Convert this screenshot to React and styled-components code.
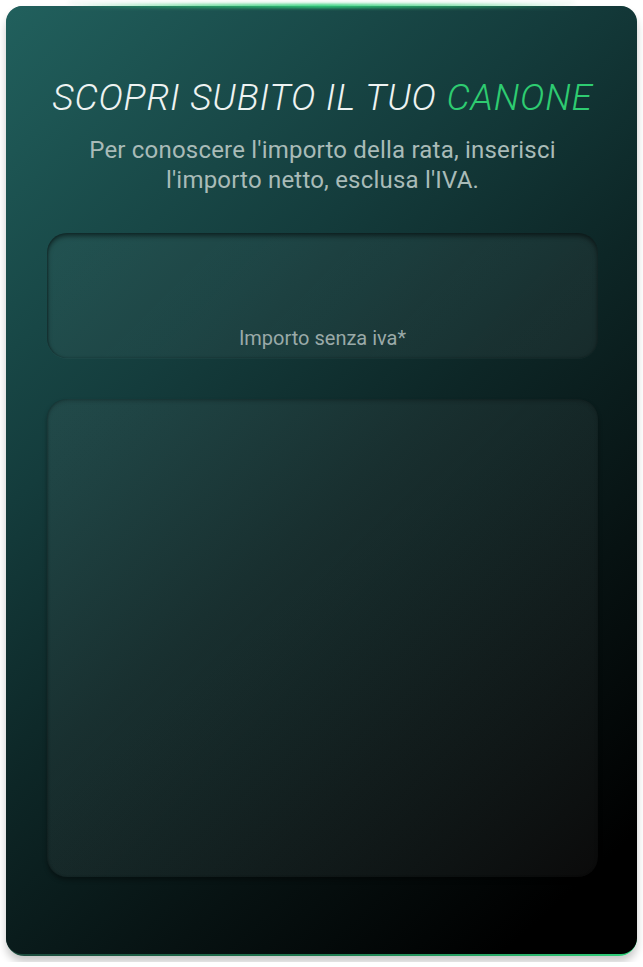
import React, { useState } from 'react';
import styled, { createGlobalStyle } from 'styled-components';

const GlobalStyle = createGlobalStyle`
    * { box-sizing: border-box; }
    body {
        margin: 0;
        background: #ffffff;
        font-family: Roboto, "Liberation Sans", sans-serif;
    }
`;

const App = () => {
    const [amount, setAmount] = useState('');

    return(
        <Page>
            <GlobalStyle />
            <Frame>
                <Card>
                    <Glow />
                    <Title>SCOPRI SUBITO IL TUO <Accent>CANONE</Accent></Title>
                    <Subtitle>
                        Per conoscere l'importo della rata, inserisci<br />
                        l'importo netto, esclusa l'IVA.
                    </Subtitle>
                    <Field>
                        <Input value={amount} onChange={e => setAmount(e.target.value)} />
                        <Label>Importo senza iva*</Label>
                    </Field>
                    <Result />
                </Card>
            </Frame>
        </Page>
    );
}

const Page = styled.div`
    padding: 6px;
`;

const Frame = styled.div`
    border-radius: 18px;
    padding-bottom: 2px;
    background: linear-gradient(90deg, #1d4a3d 0%, #1f7a50 50%, #2fd07a 100%);
    box-shadow: 0 6px 8px rgba(0, 0, 0, 0.22);
`;

const Card = styled.div`
    position: relative;
    height: 948px;
    border-radius: 16px;
    padding: 70px 39px 0 41px;
    display: flex;
    flex-direction: column;
    background: linear-gradient(138deg, #21605d 0%, #143c3c 33%, #0d2626 52%, #071212 72%, #000000 92%);
`;

const Glow = styled.div`
    position: absolute;
    top: -2px;
    left: 10%;
    right: 10%;
    height: 4px;
    border-radius: 2px;
    background: linear-gradient(90deg, rgba(46, 204, 113, 0) 0%, rgba(46, 204, 113, 0.6) 25%, #2fd07a 50%, rgba(46, 204, 113, 0.6) 75%, rgba(46, 204, 113, 0) 100%);
    filter: blur(1.5px);
    box-shadow: 0 -2px 4px rgba(190, 225, 205, 0.35);
`;

const Title = styled.h1`
    margin: 0;
    text-align: center;
    font-size: 37px;
    line-height: 44px;
    font-style: italic;
    font-weight: 300;
    letter-spacing: 0.8px;
    color: #eef3f2;
    white-space: nowrap;
`;

const Accent = styled.span`
    color: #2ecc71;
`;

const Subtitle = styled.p`
    margin: 15px 0 0;
    text-align: center;
    font-size: 24px;
    line-height: 30px;
    font-weight: 400;
    letter-spacing: 0.2px;
    color: #a9bbb8;
`;

const Field = styled.label`
    margin-top: 38px;
    height: 125px;
    border-radius: 20px;
    display: flex;
    flex-direction: column;
    justify-content: flex-end;
    align-items: center;
    padding-bottom: 10px;
    background: linear-gradient(135deg, rgba(255, 255, 255, 0.035), rgba(255, 255, 255, 0.05));
    box-shadow: inset 0 3px 5px rgba(0, 0, 0, 0.5), inset 1px 0 2px rgba(0, 0, 0, 0.25), 0 1px 0 rgba(255, 255, 255, 0.03);
`;

const Input = styled.input`
    flex: 1;
    width: 100%;
    min-height: 0;
    border: none;
    background: transparent;
    outline: none;
    color: #eef3f2;
    font-size: 22px;
    text-align: center;
`;

const Label = styled.span`
    font-size: 20px;
    line-height: 20px;
    color: #9aaaa8;
`;

const Result = styled.div`
    margin-top: 41px;
    height: 478px;
    border-radius: 20px;
    background: linear-gradient(135deg, rgba(255, 255, 255, 0.05), rgba(255, 255, 255, 0.045));
    box-shadow: inset 0 2px 4px rgba(0, 0, 0, 0.2), inset 1px 0 2px rgba(0, 0, 0, 0.2), 0 3px 4px rgba(0, 0, 0, 0.35);
`;

export default App;
